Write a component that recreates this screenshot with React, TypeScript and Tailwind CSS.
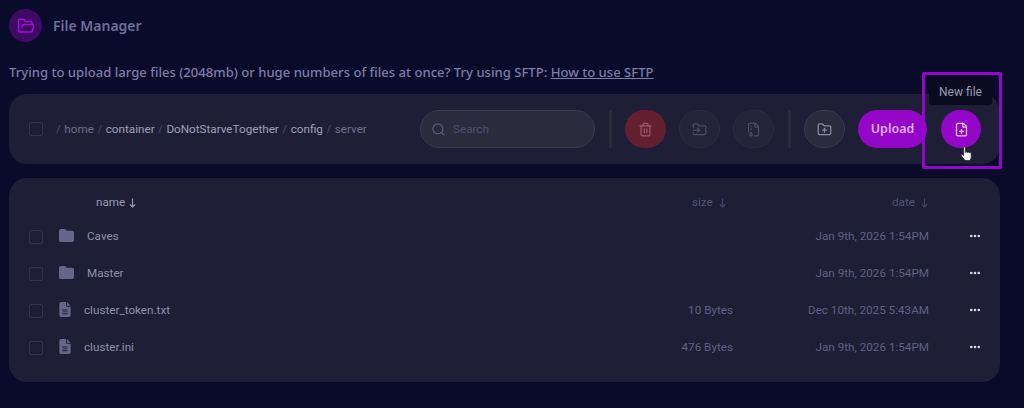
import React from 'react';
import { Search, Trash2, FolderOpen, FolderInput, FileArchive, FolderPlus, FilePlus } from 'lucide-react';
import { FaFolder, FaFileLines, FaEllipsis, FaArrowDownLong } from 'react-icons/fa6';

const rows = [
  { name: 'Caves', folder: true, size: '', date: 'Jan 9th, 2026 1:54PM' },
  { name: 'Master', folder: true, size: '', date: 'Jan 9th, 2026 1:54PM' },
  { name: 'cluster_token.txt', folder: false, size: '10 Bytes', date: 'Dec 10th, 2025 5:43AM' },
  { name: 'cluster.ini', folder: false, size: '476 Bytes', date: 'Jan 9th, 2026 1:54PM' },
];

const Checkbox = () => <div className="w-[14px] h-[14px] rounded-[2px] border border-[#34344a] shrink-0" />;

const RoundButton = ({ children }: { children: React.ReactNode }) => (
  <button className="w-[41px] h-[38px] rounded-full bg-[#232339] border border-[#2b2b40] flex items-center justify-center text-[#4c4c66]">
    {children}
  </button>
);

const Divider = () => <div className="w-[3px] h-[38px] bg-[#2a2a3c]" />;

export default function App() {
  return (
    <div className="relative w-[1024px] h-[408px] overflow-hidden bg-[#0a0a2a] px-[9px] pt-[9px] font-['Roboto',sans-serif]">
      {/* Header */}
      <div className="flex items-center gap-[11px] h-[33px]">
        <div className="w-[33px] h-[33px] rounded-full bg-[#3f0a63] flex items-center justify-center text-[#a010d8]">
          <FolderOpen className="w-[18px] h-[18px]" strokeWidth={2} />
        </div>
        <h1 className="text-[14px] font-semibold text-[#6e6e9a] font-['Noto_Sans',sans-serif]">File Manager</h1>
      </div>

      <p className="mt-[20px] h-[20px] leading-[20px] text-[13.1px] font-medium text-[#7d7da6] font-['Noto_Sans',sans-serif]">
        Trying to upload large files (2048mb) or huge numbers of files at once? Try using SFTP: <span className="underline">How to use SFTP</span>
      </p>

      {/* Toolbar */}
      <div className="mt-[12px] w-[991px] h-[70px] rounded-[18px] bg-[#1e1e36] flex items-center pl-[20px]">
        <Checkbox />
        <div className="ml-[13px] w-[364px] pt-[2px] text-[11.7px] text-[#4c4c70] whitespace-nowrap flex gap-[3.5px]">
          <span>/</span><span className="text-[#6f6f90]">home</span><span>/</span><span className="text-[#a0a0bc]">container</span><span>/</span><span className="text-[#a0a0bc]">DoNotStarveTogether</span><span>/</span><span className="text-[#a0a0bc]">config</span><span>/</span><span className="text-[#6f6f90]">server</span>
        </div>
        <div className="w-[175px] h-[38px] rounded-full bg-[#2b2b3d] border border-[#3a3a4c] flex items-center pl-[10px] gap-[7px] text-[#5c5c80]">
          <Search className="w-[15px] h-[15px]" />
          <span className="text-[11.7px] text-[#4e4e72] pt-[1px]">Search</span>
        </div>
        <div className="ml-[14px]"><Divider /></div>
        <button className="ml-[13px] w-[41px] h-[38px] rounded-full bg-[#652030] flex items-center justify-center text-[#a05a66]">
          <Trash2 className="w-[15px] h-[15px]" />
        </button>
        <div className="ml-[13px]"><RoundButton><FolderInput className="w-[15px] h-[15px]" /></RoundButton></div>
        <div className="ml-[13px]"><RoundButton><FileArchive className="w-[15px] h-[15px]" /></RoundButton></div>
        <div className="ml-[14px]"><Divider /></div>
        <div className="ml-[13px]">
          <button className="w-[41px] h-[38px] rounded-full bg-[#2b2b3d] border border-[#3a3a4c] flex items-center justify-center text-[#8a8aa0]">
            <FolderPlus className="w-[15px] h-[15px]" />
          </button>
        </div>
        <button className="ml-[13px] w-[69px] h-[38px] rounded-full bg-[#9406c8] text-[12.5px] font-semibold text-[#dcb0f0] font-['Noto_Sans',sans-serif]">Upload</button>
        <button className="ml-[14px] w-[40px] h-[38px] rounded-full bg-[#9406c8] flex items-center justify-center text-[#e8c8f5]">
          <FilePlus className="w-[15px] h-[15px]" />
        </button>
      </div>

      {/* File table */}
      <div className="mt-[14px] w-[991px] h-[204px] rounded-[18px] bg-[#1e1e36] pl-[20px] pt-[10px] text-[11.7px]">
        <div className="flex items-center h-[30px] text-[#55557a]">
          <div className="w-[67px]" />
          <div className="w-[596px] flex items-center text-[#9a9ab8]">name<FaArrowDownLong className="ml-[4px] w-[7px] h-[10px]" /></div>
          <div className="w-[200px] flex items-center">size<FaArrowDownLong className="ml-[6px] w-[7px] h-[10px] text-[#44446a]" /></div>
          <div className="flex items-center">date<FaArrowDownLong className="ml-[6px] w-[7px] h-[10px] text-[#44446a]" /></div>
        </div>
        {rows.map((row) => (
          <div key={row.name} className="flex items-center h-[37px]">
            <Checkbox />
            <div className="ml-[16px] w-[16px] -mt-[2px] text-[#66668a]">
              {row.folder ? <FaFolder className="w-[15px] h-[15px]" /> : <FaFileLines className="w-[12px] h-[15px]" />}
            </div>
            <div className={`${row.folder ? 'ml-[12px] w-[200px]' : 'ml-[9px] w-[203px]'} text-[#9090ac]`}>{row.name}</div>
            <div className="w-[446px] text-right text-[#606084]">{row.size}</div>
            <div className="w-[196px] text-right text-[#606084]">{row.date}</div>
            <FaEllipsis className="ml-[40px] -mt-[2px] w-[12px] h-[12px] text-[#d8d8e4]" />
          </div>
        ))}
      </div>

      {/* Highlight box, tooltip and cursor drawn over the toolbar */}
      <div className="absolute left-[922px] top-[72px] w-[80px] h-[97px] border-[3px] border-[#9406c8] rounded-[2px]" />
      <div className="absolute left-[929px] top-[78px] w-[63px] h-[27px] rounded-[3px] bg-[#0b0b20] text-[12px] text-[#9a9ab0] flex items-center justify-center">New file</div>
      <svg className="absolute left-[960px] top-[146px]" width="14" height="16" viewBox="0 0 14 16">
        <path d="M3.5 1.6c0-1 1.8-1 1.8 0V6.5c.3-.9 1.8-.9 2 .1.4-.8 1.8-.7 2 .3.5-.6 1.8-.4 1.9.6V11c0 1.6-.6 2.7-1.3 3.6H5L1.3 9.8c-.6-.9.5-1.9 1.3-1.1l.9 1z" fill="#fff" stroke="#222" strokeWidth="0.8" />
      </svg>
    </div>
  );
}
